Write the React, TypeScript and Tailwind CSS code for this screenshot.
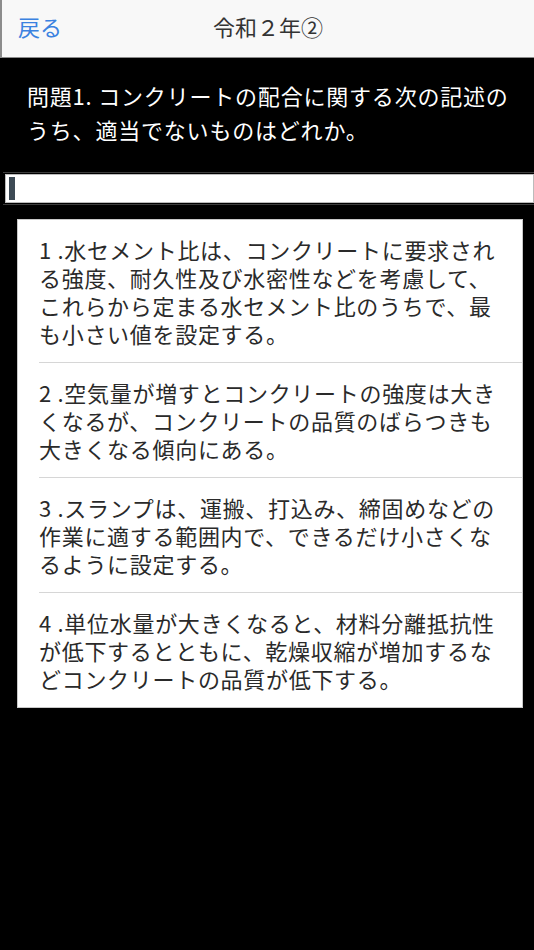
const choices = [
  '1 .水セメント比は、コンクリートに要求される強度、耐久性及び水密性などを考慮して、これらから定まる水セメント比のうちで、最も小さい値を設定する。',
  '2 .空気量が増すとコンクリートの強度は大きくなるが、コンクリートの品質のばらつきも大きくなる傾向にある。',
  '3 .スランプは、運搬、打込み、締固めなどの作業に適する範囲内で、できるだけ小さくなるように設定する。',
  '4 .単位水量が大きくなると、材料分離抵抗性が低下するとともに、乾燥収縮が増加するなどコンクリートの品質が低下する。',
]

export default function App() {
  return (
    <div
      className="min-h-[950px] w-full bg-black"
      style={{ fontFamily: '"Noto Sans CJK JP", "Noto Sans", sans-serif' }}
    >
      {/* header */}
      <div className="relative flex h-[58px] items-center justify-center border-b border-l-2 border-[#8c8c8c] bg-[#f8f8f8] pb-[5px]">
        <button className="absolute left-[16px] top-[11px] text-[22px] leading-[30px] text-[#3b82e0]">
          戻る
        </button>
        <h1 className="text-[22px] leading-[30px] text-[#333]">令和２年②</h1>
      </div>

      {/* question */}
      <div className="pl-[27px] pr-[16px] pt-[20px] pb-[26px]">
        <p className="text-[22px] leading-[34px] tracking-[0.8px] text-white">
          問題1. コンクリートの配合に関する次の記述のうち、適当でないものはどれか。
        </p>
      </div>

      {/* progress */}
      <div className="ml-[3px] border-y border-[#3c3c3c] py-[1px]">
        <div className="ml-[2px] flex h-[29px] items-center border border-[#bbb] bg-white pl-[3px]">
          <div className="h-[23px] w-[6px] bg-[#3d4a55]" />
        </div>
      </div>

      {/* choices */}
      <div className="ml-[17px] mr-[11px] mt-[14px] border border-[#c8c8c8] bg-white">
        {choices.map((c, i) => (
          <div key={i} className={'ml-[21px] ' + (i > 0 ? 'border-t border-[#d6d6d6]' : '')}>
            <p className="py-[15px] pr-[18px] text-[22px] leading-[28px] tracking-[0.7px] text-[#2a2a2a]">
              {c}
            </p>
          </div>
        ))}
      </div>
    </div>
  )
}
